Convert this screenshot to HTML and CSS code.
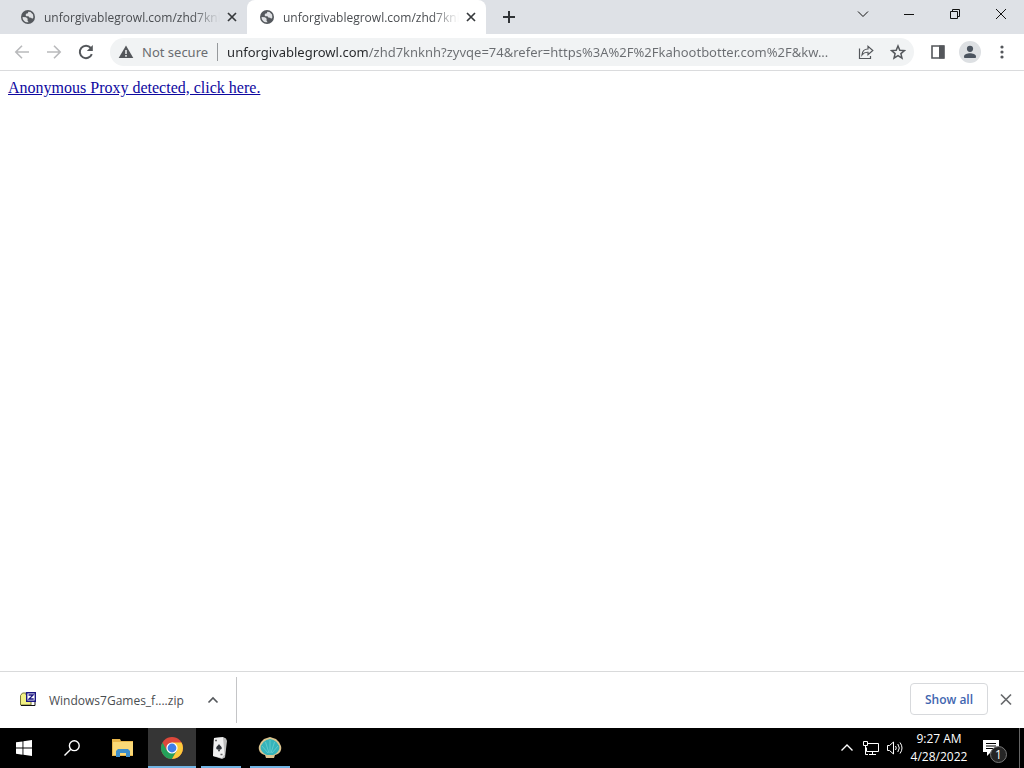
FILE: index.html
```html
<!DOCTYPE html>
<html lang="en">
<head>
<meta charset="utf-8">
<title>unforgivablegrowl.com</title>
<meta name="viewport" content="width=device-width, initial-scale=1">
<link rel="stylesheet" href="styles.css">
</head>
<body>
<svg class="defs" width="0" height="0" aria-hidden="true">
  <symbol id="globe" viewBox="0 0 16 16">
    <circle cx="8" cy="8" r="7" fill="#54585d"/>
    <path d="M2.600 8 6 8.300 7.700 9.800 7.500 11.500 8.600 13.300C5.300 13.800 2.500 11.500 2.600 8zM5.500 6 6.500 4.600 8 4.200 8.200 2.800 10.500 3 13 5.500 13.400 8.500 12.300 9.800 11 8.700 9.300 8.600 8.500 7.200 6.300 7.300z" fill="#dfe1e4"/>
  </symbol>
  <symbol id="cross" viewBox="0 0 16 16">
    <path d="M4 4l8 8M12 4l-8 8" fill="none" stroke="currentColor" stroke-width="1.700"/>
  </symbol>
</svg>
<header class="browser">
  <div class="tabstrip">
    <div class="tab">
      <svg class="favicon" aria-hidden="true"><use href="#globe"/></svg>
      <span class="tab-title">unforgivablegrowl.com/zhd7knk</span>
      <button class="tab-close" aria-label="Close tab"><svg width="16" height="16"><use href="#cross"/></svg></button>
    </div>
    <div class="tab active">
      <svg class="favicon" aria-hidden="true"><use href="#globe"/></svg>
      <span class="tab-title">unforgivablegrowl.com/zhd7knk</span>
      <button class="tab-close" aria-label="Close tab"><svg width="16" height="16"><use href="#cross"/></svg></button>
    </div>
    <button class="new-tab" aria-label="New tab"><svg width="16" height="16" viewBox="0 0 16 16"><path d="M8 2v12M2 8h12" stroke="#303336" stroke-width="2"/></svg></button>
    <div class="window-controls">
      <button aria-label="Search tabs"><svg width="16" height="16" viewBox="0 0 16 16"><path d="M3 5.500l5 5 5-5"/></svg></button>
      <button aria-label="Minimize"><svg width="16" height="16" viewBox="0 0 16 16"><path d="M3 8.500h10"/></svg></button>
      <button aria-label="Restore"><svg width="16" height="16" viewBox="0 0 16 16"><path d="M3.500 5.500h7v7h-7zM5.500 5.500v-2h7v7h-2"/></svg></button>
      <button aria-label="Close window"><svg width="16" height="16" viewBox="0 0 16 16"><path d="M3 3l10 10M13 3L3 13"/></svg></button>
    </div>
  </div>
  <div class="toolbar">
    <button class="tool dim" aria-label="Back"><svg width="16" height="16" viewBox="0 0 16 16"><path d="M15 8H2M8 1.800L1.800 8 8 14.200"/></svg></button>
    <button class="tool dim" aria-label="Forward"><svg width="16" height="16" viewBox="0 0 16 16"><path d="M1 8h13M8 1.800L14.200 8 8 14.200"/></svg></button>
    <button class="tool" aria-label="Reload"><svg width="16" height="16" viewBox="0 0 16 16"><path d="M13.800 10.200A6.200 6.200 0 1 1 12.800 4" stroke-width="2"/><path d="M14.800 1v6H8.800z" fill="currentColor" stroke="none"/></svg></button>
    <div class="omnibox">
      <button class="security"><svg width="16" height="16" viewBox="0 0 16 16"><path d="M8 1.500L15.300 14H.7z" fill="#54575b"/><path d="M8 6v4M8 11v1.700" stroke="#f1f3f4" stroke-width="1.500"/></svg>Not secure</button>
      <input class="url" type="text" aria-label="Address" value="unforgivablegrowl.com/zhd7knknh?zyvqe=74&amp;refer=https%3A%2F%2Fkahootbotter.com%2F&amp;kw...">
      <button class="tool" aria-label="Share"><svg width="16" height="16" viewBox="0 0 16 16"><path d="M1.500 4.500v10h11V12M4 11c.3-4 2.500-6 6-6V2.300l4.800 4.200L10 10.700V8.300C7.500 8.100 5.500 9 4 11z" stroke-width="1.200"/></svg></button>
      <button class="tool" aria-label="Bookmark"><svg width="16" height="16" viewBox="0 0 16 16"><path d="M8 2l1.800 4.200 4.600.4-3.500 3 1.100 4.500L8 11.700l-4 2.400 1.100-4.500-3.500-3 4.600-.4z" stroke-width="1.500"/></svg></button>
    </div>
    <button class="tool" aria-label="Side panel"><svg width="16" height="16" viewBox="0 0 16 16"><path d="M2 2h12v12H2z"/><path d="M9 1.500h5v13H9z" fill="currentColor" stroke="none"/></svg></button>
    <button class="tool profile" aria-label="Profile"><svg width="16" height="16" viewBox="0 0 16 16"><circle cx="8" cy="4.800" r="3.100"/><path d="M2 14v-1.500C2 10 5.500 9.200 8 9.200s6 .8 6 3.300V14z"/></svg></button>
    <button class="tool" aria-label="Menu"><svg width="16" height="16" viewBox="0 0 16 16"><g fill="currentColor" stroke="none"><circle cx="8" cy="3" r="1.600"/><circle cx="8" cy="8" r="1.600"/><circle cx="8" cy="13" r="1.600"/></g></svg></button>
  </div>
</header>
<main class="page"><a href="#">Anonymous Proxy detected, click here.</a></main>
<section class="shelf" aria-label="Downloads">
  <div class="download">
    <button class="file"><svg width="16" height="16" viewBox="0 0 16 16"><path d="M.5 13V3.500l2-2.500H6v2h5v10z" fill="#f2f184" stroke="#77763c"/><path d="M1 13.500h14V9.500" fill="none" stroke="#111"/><path d="M6.700.700h8.600v8.600H6.700z" fill="#fff" stroke="#1b1681" stroke-width="1.400"/><path d="M8.500 3h4.600L9 7h4.700" fill="none" stroke="#1b1681" stroke-width="1.300"/></svg><span>Windows7Games_f....zip</span></button>
    <button class="tool" aria-label="Download options"><svg width="16" height="16" viewBox="0 0 16 16"><path d="M3.500 10.500L8 6l4.500 4.500"/></svg></button>
  </div>
  <button class="show-all">Show all</button>
  <button class="shelf-close" aria-label="Close downloads bar"><svg width="16" height="16" viewBox="0 0 16 16"><path d="M3 2.500l10 10M13 2.500l-10 10" stroke="#686a6d" stroke-width="1.700"/></svg></button>
</section>
<footer class="taskbar">
  <button class="task" aria-label="Start"><svg width="16" height="16" viewBox="0 0 16 16"><path d="M0 2.300L6.500 1.400V7.500H0zM7.400 1.200L16 0v7.500H7.400zM0 8.500h6.500v6.200L0 13.700zM7.400 8.500H16V16l-8.600-1.200z" fill="#fff"/></svg></button>
  <button class="task" aria-label="Search"><svg width="16" height="16" viewBox="0 0 16 16" fill="none" stroke="#fff" stroke-width="1.400"><circle cx="10.300" cy="5.700" r="4.900"/><path d="M6.800 9.200L.5 15.500"/></svg></button>
  <button class="task" aria-label="File Explorer"><svg width="24" height="24" viewBox="0 0 24 24"><path d="M1 3h8l1 2h12v15H1z" fill="#e9b64a"/><path d="M2 6h20v13H2z" fill="#fbd977"/><path d="M5 21v-6l2-2h10l2 2v6h-4v-4H9v4z" fill="#3d8ecb"/></svg></button>
  <button class="task open current" aria-label="Chrome"><svg width="24" height="24" viewBox="0 0 24 24"><circle cx="12" cy="12" r="11" fill="#dd483b"/><path d="M2.470 6.500A11 11 0 0 0 12 23l5-8.500-5-2.500-4.800 3z" fill="#24a15a"/><path d="M12 6.500h9.500A11 11 0 0 1 12 23l4.800-8.300z" fill="#fbcb3b"/><circle cx="12" cy="12" r="5.600" fill="#fff"/><circle cx="12" cy="12" r="4.400" fill="#3f7ee8"/></svg></button>
  <button class="task open" aria-label="Solitaire"><svg width="24" height="24" viewBox="0 0 24 24"><path d="M5 2l9-1 3 1.500L18 5l-2 16.500-3 1.500-9-3z" fill="#bdbdbd"/><path d="M5 2l9-.7 1.500 17L13 22l-9-2z" fill="#f0f0f0"/><path d="M10 8c1 1.700 2.800 2.500 2.800 4s-1.600 2-2.200 1l.4 2.200H9l.5-2.200c-.8 1-2.300.5-2.300-1S9 9.700 10 8z" fill="#30343a"/><path d="M6 4.500h2M11.500 18.500h2" stroke="#666" stroke-width="1.500"/></svg></button>
  <button class="task open" aria-label="Shell"><svg width="24" height="24" viewBox="0 0 24 24"><path d="M8 22l-1-3C2 18 0 14 1 10l2-4 3-3 3-1 3-1 3 1 3 1 3 3 2 4c1 4-1 8-6 9l-1 3z" fill="#dbc48f"/><path d="M9 19C4 17 1.500 13 3 9.500L5.500 6 8.500 4l3.500-1 3.500 1 3 2L21 9.500c1.500 3.500-1 7.500-6 9.500z" fill="#35b4ba"/><path d="M12 17V4M11 17L7.500 6M10 17L4 10M13 17l3.500-11M14 17l6-7" fill="none" stroke="#6ccfd2" stroke-width=".8"/></svg></button>
  <div class="tray">
    <button class="tray-icon" aria-label="Show hidden icons"><svg width="16" height="16" viewBox="0 0 16 16"><path d="M2.500 10.500L8 5l5.500 5.500" stroke-width="1.400"/></svg></button>
    <button class="tray-icon" aria-label="Network"><svg width="16" height="16" viewBox="0 0 16 16"><path d="M4.500 3.500h11v8H3.500v-4M9.500 11.500v3M6 14.500h7M.5 1.500h4v4h-4zM2.500 5.500v9H5"/></svg></button>
    <button class="tray-icon" aria-label="Volume"><svg width="16" height="16" viewBox="0 0 16 16"><path d="M.5 5.500h2L6.500 2v12L2.500 10.500h-2zM8.500 6q1.500 2 0 4M10.800 4q3 4 0 8M13 2.500q4 5.500 0 11"/></svg></button>
    <button class="clock"><span>9:27 AM</span><span>4/28/2022</span></button>
    <button class="notice" aria-label="1 notification"><svg width="16" height="16" viewBox="0 0 16 16"><path d="M0 0h16v12H8l-4 4v-4H0z" fill="#fff"/><path d="M3 3.500h10M3 6h10M3 8.500h7" stroke="#000"/></svg><span class="badge">1</span></button>
    <button class="desktop" aria-label="Show desktop"></button>
  </div>
</footer>
</body>
</html>
```

FILE: styles.css
```css
* { box-sizing: border-box; }
html, body { height: 100%; }
body {
  margin: 0;
  display: flex;
  flex-direction: column;
  background: #fff;
  font-family: "Open Sans", "Noto Sans", sans-serif;
  font-size: 12px;
  color: #4a4d51;
}
button, input {
  font: inherit;
  color: inherit;
  background: none;
  border: 0;
  padding: 0;
  margin: 0;
}
button {
  display: flex;
  align-items: center;
  justify-content: center;
  flex: none;
}
svg { flex: none; display: block; }
.defs { position: absolute; }

.browser { border-bottom: 1px solid #dadbdd; }
.tabstrip {
  display: flex;
  height: 34px;
  padding-left: 8px;
  background: #dee1e6;
}
.tab {
  display: flex;
  align-items: center;
  width: 239px;
  padding: 0 7px 0 12px;
  gap: 8px;
}
.tab.active { background: #fff; border-radius: 8px 8px 0 0; }
.favicon { width: 16px; height: 16px; }
.tab-title {
  flex: 1;
  min-width: 0;
  margin-right: -4px;
  overflow: hidden;
  white-space: nowrap;
  mask-image: linear-gradient(to right, #000 84%, transparent 100%);
}
.tab-close { width: 16px; color: #36393c; }
.new-tab { width: 28px; margin-left: 9px; }
.window-controls { display: flex; margin-left: auto; padding-bottom: 6px; }
.window-controls button { width: 46px; }
.window-controls path { fill: none; stroke: #111; stroke-width: 1; }

.toolbar {
  display: flex;
  align-items: center;
  height: 36px;
  padding: 0 6px;
}
.tool { width: 32px; height: 28px; color: #54575b; }
.tool svg { fill: none; stroke: currentColor; stroke-width: 1.600; }
.dim { color: #b9babc; }
.omnibox {
  flex: 1;
  min-width: 0;
  display: flex;
  align-items: center;
  height: 28px;
  margin: 0 8px;
  padding-left: 8px;
  border-radius: 14px;
  background: #f1f3f4;
  font-family: "Noto Sans", sans-serif;
  font-size: 13px;
}
.security {
  gap: 8px;
  padding-right: 9px;
  color: #6a6d71;
  border-right: 1px solid #96999c;
  height: 18px;
}
.url {
  flex: 1;
  min-width: 0;
  height: 28px;
  margin-left: 9px;
  text-overflow: ellipsis;
  background: linear-gradient(to right, #25272a 142px, #6a6d71 142px);
  background-clip: text;
  -webkit-text-fill-color: transparent;
}
.profile svg {
  box-sizing: content-box;
  padding: 3px;
  border-radius: 50%;
  background: #dde0e3;
}
.profile svg * { fill: #4b545f; stroke: none; }

.page {
  flex: 1;
  padding: 8px;
  font-family: "Liberation Serif", "Times New Roman", serif;
  font-size: 16px;
  line-height: 18px;
}
.page a { color: #0e08a0; }

.shelf {
  display: flex;
  align-items: center;
  height: 57px;
  border-top: 1px solid #d9dadb;
}
.download {
  display: flex;
  align-items: center;
  width: 237px;
  height: 46px;
  padding-left: 20px;
  border-right: 1px solid #c4c5c7;
}
.file { gap: 13px; flex: 1; justify-content: flex-start; }
.download .tool { margin-right: 7px; }
.show-all {
  margin-left: auto;
  width: 78px;
  height: 32px;
  margin-bottom: 2px;
  border: 1px solid #d7d9dc;
  border-radius: 4px;
  color: #3f66b0;
  font-weight: 600;
}
.shelf-close { width: 36px; }

.taskbar {
  display: flex;
  height: 40px;
  background: #000;
  color: #fff;
}
.task { width: 48px; border-bottom: 2px solid transparent; border-top: 2px solid transparent; }
.task:nth-child(3) { padding-left: 6px; }
.task.open { width: 40px; margin: 0 4px 0 5px; border-bottom-color: #72b4e3; }
.task.current { width: 48px; margin: 0 0 0 4px; background: #353535; border-top-color: #353535; }
.tray { display: flex; margin-left: auto; }
.tray-icon { width: 24px; }
.tray-icon path { fill: none; stroke: #fff; }
.clock {
  flex-direction: column;
  width: 64px;
  line-height: 18px;
}
.notice { position: relative; width: 40px; }
.badge {
  position: absolute;
  left: 19px;
  top: 18px;
  width: 17px;
  height: 17px;
  border-radius: 50%;
  border: 1px solid #777;
  background: #252525;
  line-height: 15px;
}
.desktop { width: 5px; margin-left: 8px; border-left: 1px solid #666; }
```
